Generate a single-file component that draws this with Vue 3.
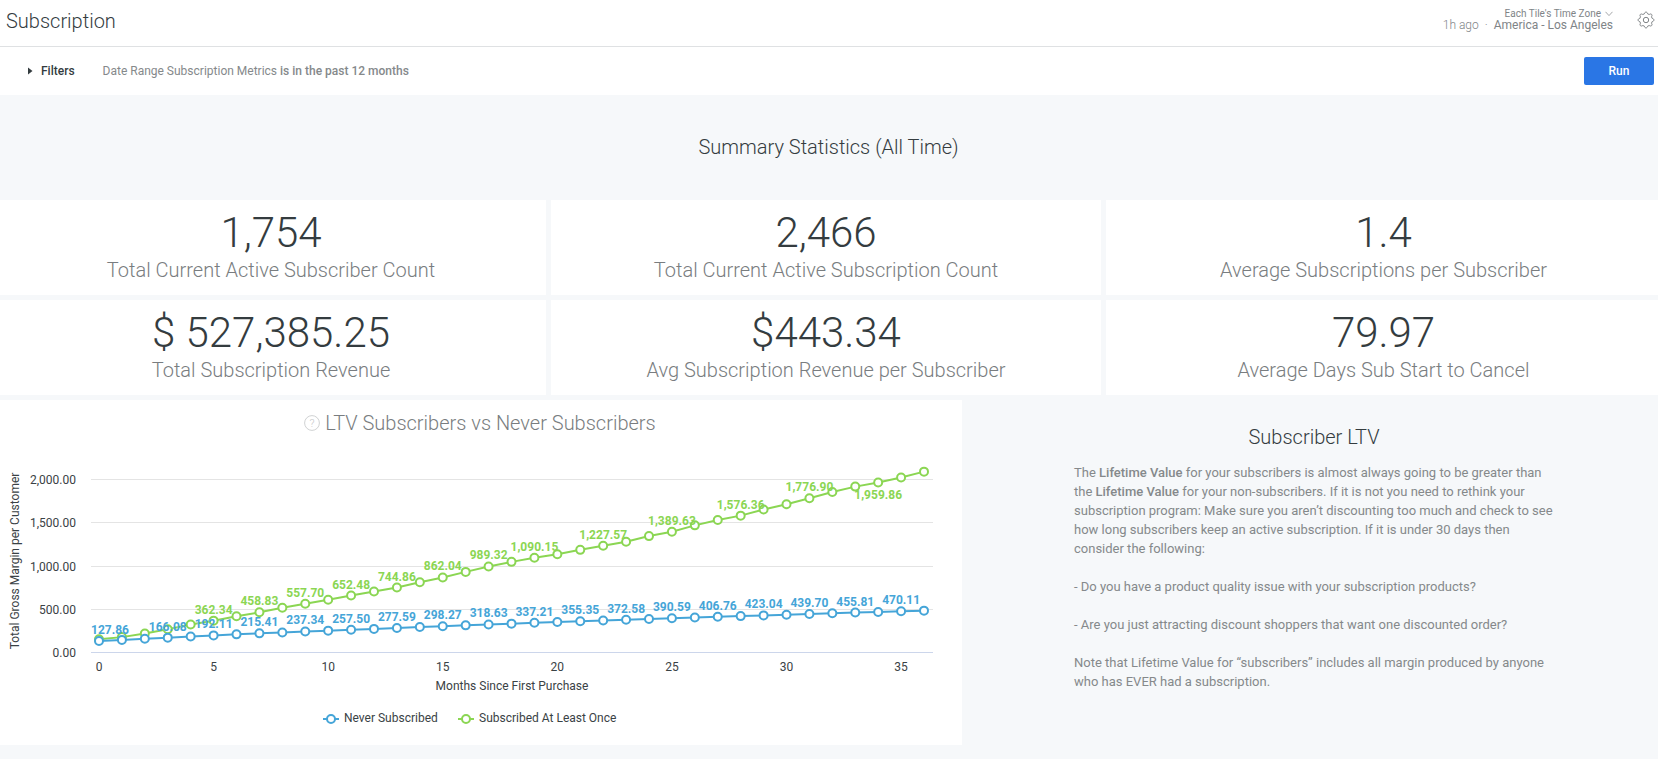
<script setup>
const stats = [
  { value: '1,754', label: 'Total Current Active Subscriber Count' },
  { value: '2,466', label: 'Total Current Active Subscription Count' },
  { value: '1.4', label: 'Average Subscriptions per Subscriber' },
  { value: '$ 527,385.25', label: 'Total Subscription Revenue' },
  { value: '$443.34', label: 'Avg Subscription Revenue per Subscriber' },
  { value: '79.97', label: 'Average Days Sub Start to Cancel' },
]

const never = [
  127.86, 140, 153, 166.08, 179, 192.11, 204, 215.41, 226, 237.34, 247, 257.5, 267, 277.59, 288,
  298.27, 308, 318.63, 328, 337.21, 346, 355.35, 364, 372.58, 382, 390.59, 399, 406.76, 415, 423.04,
  431, 439.7, 448, 455.81, 463, 470.11, 478,
]
const once = [
  148, 172, 213, 262, 318, 362.34, 414, 458.83, 512, 557.7, 604, 652.48, 700, 744.86, 806, 862.04,
  926, 989.32, 1042, 1090.15, 1131, 1181, 1227.57, 1275, 1340, 1389.63, 1464, 1526, 1576.36, 1647,
  1709, 1776.9, 1850, 1912, 1959.86, 2018, 2085,
]

// Plot area inside the chart's own coordinate system
const baseY = 212
const xOf = (i) => 99 + (i * 825) / 36
const yOf = (v) => baseY - (v * 173) / 2000
const fmt = (v) => v.toLocaleString('en-US', { minimumFractionDigits: 2, maximumFractionDigits: 2 })

function makeSeries(name, cls, values, labelled) {
  const points = values.map((v, i) => ({ x: xOf(i), y: yOf(v) }))
  const labels = labelled.map((i) => ({
    x: Math.max(xOf(i), 110),
    y: yOf(values[i]) + (i === 34 ? 17 : -7),
    text: fmt(values[i]),
  }))
  return { name, cls, points, labels, line: points.map((p) => `${p.x},${p.y}`).join(' ') }
}

const series = [
  makeSeries('Subscribed At Least Once', 'green', once,
    [5, 7, 9, 11, 13, 15, 17, 19, 22, 25, 28, 31, 34]),
  makeSeries('Never Subscribed', 'blue', never,
    [0, 3, 5, 7, 9, 11, 13, 15, 17, 19, 21, 23, 25, 27, 29, 31, 33, 35]),
]
const yTicks = [2000, 1500, 1000, 500, 0].map((v) => ({ v, y: Math.round(yOf(v)) + 0.5, text: fmt(v) }))
const xTicks = [0, 5, 10, 15, 20, 25, 30, 35]
</script>

<template>
  <div class="page">
    <header class="topbar">
      <h1>Subscription</h1>
      <div class="meta">
        <div class="zone">
          <button type="button" class="zone-pick">
            Each Tile's Time Zone
            <svg width="8" height="6" viewBox="0 0 8 6"><path d="M0.5 0.8 4 4.6 7.5 0.8" /></svg>
          </button>
          <div class="zone-now">
            <span>1h ago</span><span class="dot">·</span><b>America - Los Angeles</b>
          </div>
        </div>
        <button type="button" class="gear" aria-label="Settings">
          <svg width="18" height="18" viewBox="0 0 18 18">
            <path d="M7.4 2.8C7.7 1.700 8.100 1.100 9 1.100s1.300.6 1.600 1.700l1.600.7c1-.6 1.800-.8 2.400-.1s.5 1.400-.1 2.400l.7 1.600c1.100.3 1.700.7 1.700 1.600s-.6 1.300-1.700 1.600l-.7 1.600c.6 1 .8 1.800.1 2.400s-1.400.5-2.400-.1l-1.600.7c-.3 1.100-.7 1.700-1.600 1.700s-1.300-.6-1.600-1.700l-1.600-.7c-1 .6-1.800.8-2.400.1s-.5-1.400.1-2.400l-.7-1.600C1.700 10.300 1.100 9.900 1.100 9s.6-1.300 1.700-1.600l.7-1.600c-.6-1-.8-1.800-.1-2.400s1.400-.5 2.400.1z" />
            <circle cx="9" cy="9" r="2.700" />
          </svg>
        </button>
      </div>
    </header>

    <section class="filters">
      <button type="button" class="filter-toggle">
        <svg width="5" height="8" viewBox="0 0 5 8"><path d="M0 0.500 4.500 4 0 7.500z" /></svg>
        Filters
      </button>
      <p>Date Range Subscription Metrics <b>is in the past 12 months</b></p>
      <button type="button" class="run">Run</button>
    </section>

    <main>
      <h2 class="summary">Summary Statistics (All Time)</h2>

      <section class="stats">
        <article v-for="s in stats" :key="s.label" class="stat">
          <div class="value">{{ s.value }}</div>
          <div class="label">{{ s.label }}</div>
        </article>
      </section>

      <section class="lower">
        <article class="chart">
          <h3>
            <svg width="16" height="16" viewBox="0 0 16 16">
              <circle cx="8" cy="8" r="7.400" />
              <text x="8" y="12">?</text>
            </svg>
            LTV Subscribers vs Never Subscribers
          </h3>
          <svg class="plot" viewBox="-4 0 966 305" role="img" aria-label="LTV Subscribers vs Never Subscribers">
            <line v-for="t in yTicks" :key="'g' + t.v" class="grid" :class="{ base: t.v === 0 }" x1="91" x2="933" :y1="t.y" :y2="t.y" />
            <text v-for="t in yTicks" :key="'y' + t.v" class="axis end" x="76" :y="t.y + 4">{{ t.text }}</text>
            <text v-for="t in xTicks" :key="'x' + t" class="axis mid" :x="xOf(t)" y="231">{{ t }}</text>
            <text class="axis mid" x="512" y="250">Months Since First Purchase</text>
            <text class="axis mid" transform="translate(19 121) rotate(-90)">Total Gross Margin per Customer</text>
            <g v-for="s in series" :key="s.cls" :class="s.cls">
              <polyline :points="s.line" />
              <circle v-for="(p, i) in s.points" :key="i" :cx="p.x" :cy="p.y" r="4" />
            </g>
            <g v-for="s in series" :key="'l' + s.cls" :class="s.cls">
              <text v-for="l in s.labels" :key="l.text" class="point" :x="l.x" :y="l.y">{{ l.text }}</text>
            </g>
            <g class="blue"><path d="M323 279h16" /><circle cx="331" cy="279" r="4" /></g>
            <text class="axis" x="344" y="282">Never Subscribed</text>
            <g class="green"><path d="M458 279h16" /><circle cx="466" cy="279" r="4" /></g>
            <text class="axis" x="479" y="282">Subscribed At Least Once</text>
          </svg>
        </article>

        <article class="note">
          <h2>Subscriber LTV</h2>
          <div class="copy">
            <p>
              The <b>Lifetime Value</b> for your subscribers is almost always going to be greater than the
              <b>Lifetime Value</b> for your non-subscribers. If it is not you need to rethink your
              subscription program: Make sure you aren’t discounting too much and check to see how long
              subscribers keep an active subscription. If it is under 30 days then consider the following:
            </p>
            <p>- Do you have a product quality issue with your subscription products?</p>
            <p>- Are you just attracting discount shoppers that want one discounted order?</p>
            <p>
              Note that Lifetime Value for “subscribers” includes all margin produced by anyone who has
              EVER had a subscription.
            </p>
          </div>
        </article>
      </section>
    </main>
  </div>
</template>

<style>
body {
  margin: 0;
  background: #f6f8fa;
}
</style>

<style scoped>
.page {
  font-family: Roboto, "Liberation Sans", sans-serif;
  font-size: 12px;
  line-height: 16px;
  color: #343c3f;
  overflow-x: hidden;
  padding-bottom: 14px;
}
h1, h2, h3, p {
  margin: 0;
}
h1, h2, h3 {
  font-size: 20px;
  line-height: 24px;
  font-weight: 300;
}
b {
  font-weight: 500;
}
button {
  font: inherit;
  color: inherit;
  border: 0;
  padding: 0;
  background: none;
  cursor: pointer;
}
.topbar {
  display: flex;
  align-items: center;
  justify-content: space-between;
  height: 46px;
  padding: 0 3px 0 6px;
  background: #fff;
  border-bottom: 1px solid #dfe1e3;
}
h1 {
  padding-bottom: 4px;
}
.meta {
  display: flex;
  align-items: center;
  gap: 24px;
  padding-bottom: 6px;
  color: #808487;
}
.zone {
  text-align: right;
}
.zone-pick {
  display: flex;
  align-items: center;
  gap: 4px;
  margin-left: auto;
  font-size: 10px;
  line-height: 11px;
}
.zone-pick svg, .gear svg {
  fill: none;
  stroke: currentColor;
}
.zone-pick svg {
  opacity: 0.7;
}
.zone-now {
  line-height: 13px;
  font-weight: 300;
}
.zone-now b {
  font-weight: 400;
}
.dot {
  margin: 0 6px;
}
.gear {
  display: flex;
}
.filters {
  display: flex;
  align-items: center;
  height: 48px;
  padding: 0 4px 0 28px;
  background: #fff;
  color: #85898b;
}
.filter-toggle {
  display: flex;
  align-items: center;
  gap: 8px;
  margin-right: 28px;
  font-weight: 500;
  color: #343c3f;
}
.filter-toggle svg {
  fill: currentColor;
}
.run {
  width: 70px;
  height: 28px;
  margin-left: auto;
  border-radius: 2px;
  background: #2a76e5;
  color: #fff;
  font-weight: 500;
}
main {
  margin: 0 -3px 0 -4px;
}
.summary {
  padding: 40px 0 41px;
  text-align: center;
}
.stats {
  display: grid;
  grid-template-columns: 110fr 110fr 111fr;
  gap: 5px;
}
.stat {
  padding: 8px 0 13px;
  background: #fff;
  text-align: center;
}
.value {
  font-size: 42px;
  line-height: 50px;
  font-weight: 300;
}
.label {
  font-size: 20px;
  line-height: 24px;
  font-weight: 300;
  color: #797d80;
}
.lower {
  display: grid;
  grid-template-columns: 966fr 694fr;
  gap: 5px;
  margin-top: 5px;
}
.chart {
  background: #fff;
}
h3 {
  display: flex;
  align-items: center;
  justify-content: center;
  gap: 5px;
  padding: 11px 0 5px 2px;
  color: #797d80;
}
h3 circle {
  fill: none;
  stroke: #d0d2d3;
}
h3 text {
  font-size: 11px;
  text-anchor: middle;
  fill: #c4c6c8;
}
.plot {
  display: block;
  width: 100%;
}
.grid {
  stroke: #e4e4e4;
}
.base {
  stroke: #ccd6eb;
}
.axis {
  font-size: 12px;
  fill: #3a4245;
}
.end {
  text-anchor: end;
}
.mid {
  text-anchor: middle;
}
.plot g polyline, .plot g path {
  fill: none;
  stroke-width: 2;
}
.plot g circle {
  fill: #fff;
  stroke-width: 2;
}
.blue {
  stroke: #45a5d8;
  fill: #45a5d8;
}
.green {
  stroke: #8bd653;
  fill: #8bd653;
}
.point {
  font-size: 12px;
  font-weight: 700;
  text-anchor: middle;
  stroke: none;
}
.note {
  display: flex;
  flex-direction: column;
  align-items: center;
  gap: 14px;
  padding-top: 25px;
}
.copy {
  display: flex;
  flex-direction: column;
  gap: 19px;
  max-width: 480px;
  font-size: 13px;
  line-height: 19px;
  color: #85898b;
}
</style>
